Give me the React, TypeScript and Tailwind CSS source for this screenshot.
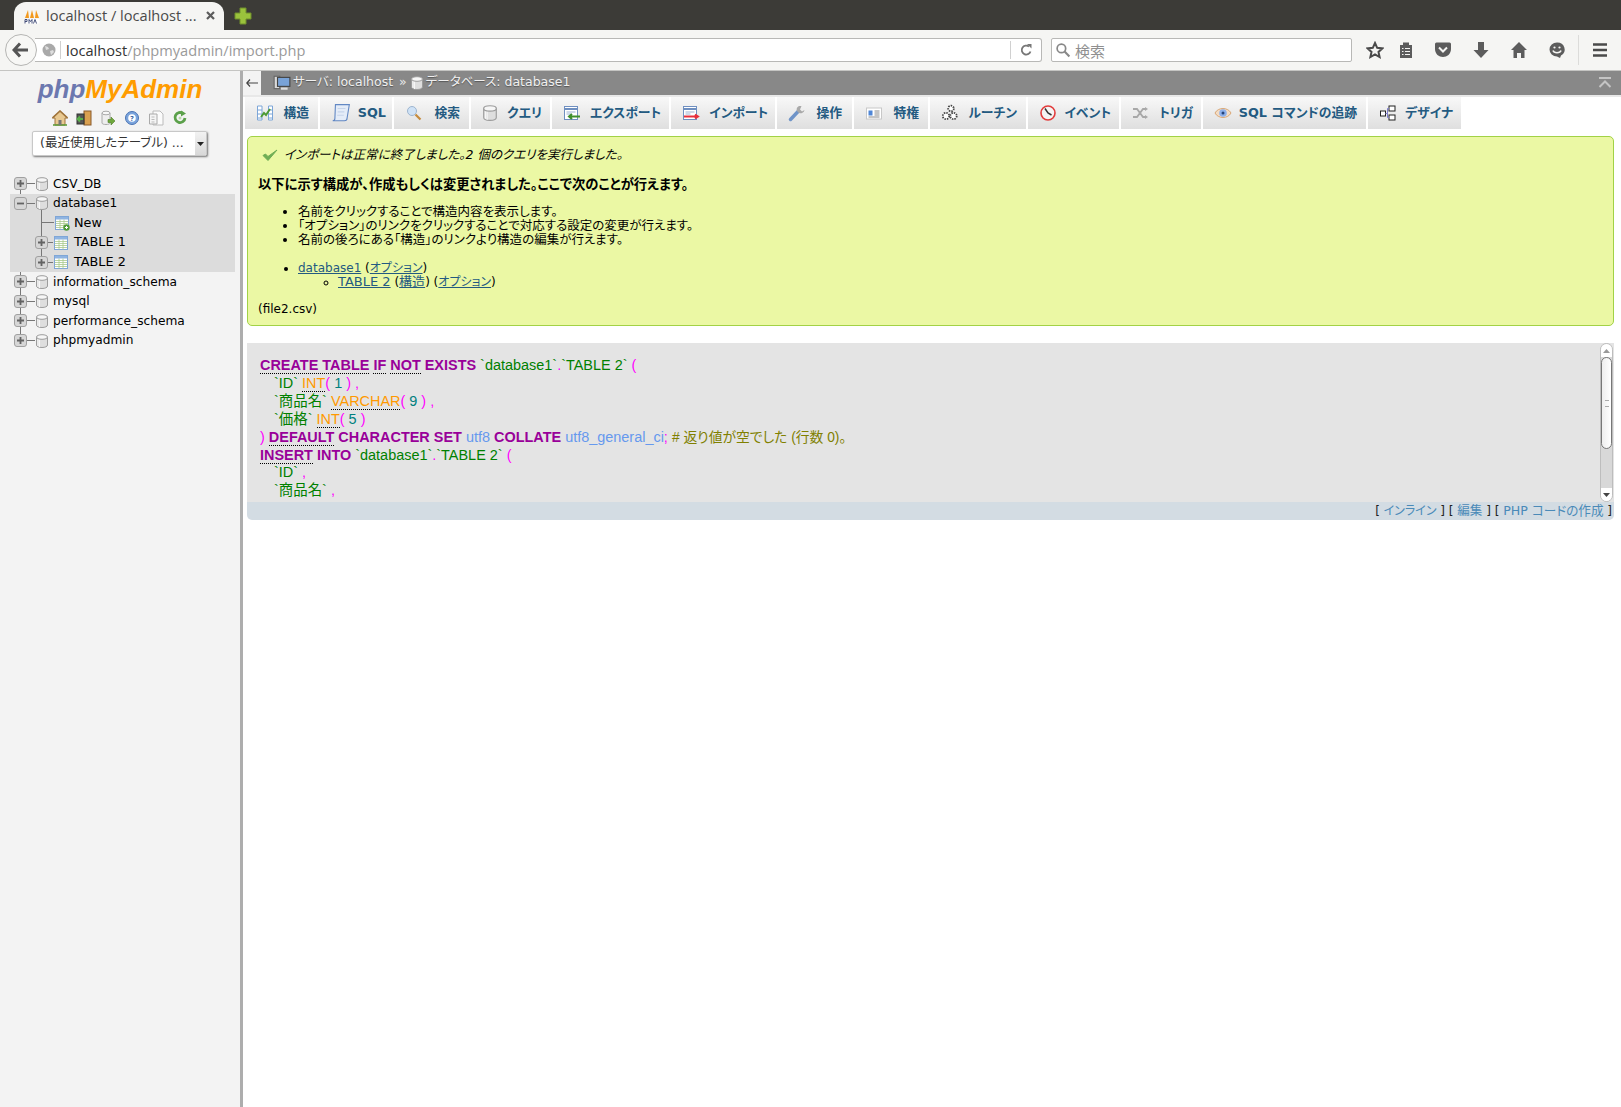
const sans = "font-['DejaVu_Sans','Noto_Sans_CJK_JP',sans-serif]";

const tabs = [
  { label: '構造', w: 'w-[75px]', icon: 'structure', pr: 'pr-[9px]' },
  { label: 'SQL', w: 'w-[74px]', icon: 'sql', pr: 'pr-[6px]' },
  { label: '検索', w: 'w-[77px]', icon: 'search', pr: 'pr-[9px]' },
  { label: 'クエリ', w: 'w-[81px]', icon: 'db', pr: 'pr-[8px]' },
  { label: 'エクスポート', w: 'w-[119px]', icon: 'export', pr: 'pr-[8px]' },
  { label: 'インポート', w: 'w-[106px]', icon: 'import', pr: 'pr-[7px]' },
  { label: '操作', w: 'w-[77px]', icon: 'wrench', pr: 'pr-[10px]' },
  { label: '特権', w: 'w-[76px]', icon: 'card', pr: 'pr-[9px]' },
  { label: 'ルーチン', w: 'w-[98px]', icon: 'gears', pr: 'pr-[9px]' },
  { label: 'イベント', w: 'w-[93px]', icon: 'clock', pr: 'pr-[8px]' },
  { label: 'トリガ', w: 'w-[82px]', icon: 'trigger', pr: 'pr-[8px]' },
  { label: 'SQL コマンドの追跡', w: 'w-[165px]', icon: 'eye', pr: 'pr-[9px]' },
  { label: 'デザイナ', w: 'w-[95px]', icon: 'designer', pr: 'pr-[8px]' },
];

function DbIcon({ size = 14 }: { size?: number }) {
  return (
    <svg width={size} height={size} viewBox="0 0 14 14" className="shrink-0">
      <path d="M1.500 3v8c0 1.500 2.400 2.500 5.500 2.500s5.500-1 5.500-2.500V3z" fill="#dedede" stroke="#9c9c9c" />
      <path d="M3 5v7M4.500 5.500v7.500" stroke="#f6f6f6" />
      <ellipse cx="7" cy="3" rx="5.500" ry="2.300" fill="#f6f6f6" stroke="#9c9c9c" />
    </svg>
  );
}

function TableIcon({ plus }: { plus?: boolean }) {
  return (
    <svg width="16" height="16" viewBox="0 0 16 16" className="shrink-0">
      <rect x="1.500" y="1.500" width="13" height="13" fill="#fff" stroke="#7fa6d6" />
      <rect x="2" y="2" width="12" height="2.500" fill="#8fb4e2" />
      <path d="M2 6.500h12M2 8.500h12M2 10.500h12M2 12.500h12M6 4.500v10M10 4.500v10" stroke="#a8c98c" strokeWidth="0.800" />
      {plus && <circle cx="12.500" cy="12.500" r="3.200" fill="#4f9a3a" />}
      {plus && <path d="M11 12.500h3M12.500 11v3" stroke="#fff" />}
    </svg>
  );
}

function Expander({ open }: { open?: boolean }) {
  return (
    <span className="w-[13px] h-[13px] shrink-0 rounded-[3px] border border-[#a0a0a0] bg-[#d6d6d6] flex items-center justify-center relative z-10">
      <svg width="9" height="9" viewBox="0 0 9 9">
        <path d={open ? 'M1 4.500h7' : 'M1 4.500h7M4.500 1v7'} stroke="#636363" strokeWidth="1.800" />
      </svg>
    </span>
  );
}

function TabIcon({ name }: { name: string }) {
  const common = { width: 18, height: 18, viewBox: '0 0 18 18', className: 'shrink-0' };
  switch (name) {
    case 'structure':
      return (
        <svg {...common}>
          <path d="M1.500 2h4.500v14H1.500zM12.500 2h4v14h-4z" fill="#fff" stroke="#7da6d8" />
          <path d="M1.500 6h4.500M1.500 10h4.500M1.500 14h4.500M12.500 6h4M12.500 10h4M12.500 14h4" stroke="#7da6d8" />
          <path d="M5 13l3-4 2 2 4-6" fill="none" stroke="#4c9a34" strokeWidth="2" />
        </svg>
      );
    case 'sql':
      return (
        <svg width="20" height="20" viewBox="0 0 18 18" className="shrink-0">
          <path d="M4 1.500h12.500l-2 12c0 1.500-1 2.500-2.500 2.500H1.500c1 0 2-.5 2-2z" fill="#e4ecf8" stroke="#6288c4" />
          <path d="M6 5h7M6 8h6M5.500 11h6" stroke="#c5d4ea" />
        </svg>
      );
    case 'search':
      return (
        <svg {...common}>
          <circle cx="7" cy="7" r="4.500" fill="#cfe2f6" stroke="#9db5cf" />
          <path d="M10.500 10.500l5 5" stroke="#c58a3c" strokeWidth="2.200" />
        </svg>
      );
    case 'db':
      return <DbIcon size={16} />;
    case 'export':
    case 'import':
      return (
        <svg {...common}>
          <rect x="1.500" y="2.500" width="13" height="13" fill="#fff" stroke="#6f8fc0" />
          <path d="M1.500 5h13" stroke="#6f8fc0" strokeWidth="2" />
          <path d="M3.500 8h9M3.500 10h5" stroke="#9db3d3" />
          {name === 'export' ? (
            <path d="M17 12.500H7M9 10l-3 2.500L9 15" fill="none" stroke="#3f8f2c" strokeWidth="2" />
          ) : (
            <path d="M2 12.500h13M13 10.500l3 2-3 2" fill="none" stroke="#e8303c" strokeWidth="2" />
          )}
        </svg>
      );
    case 'wrench':
      return (
        <svg {...common}>
          <path d="M2.500 15.500l8-8.500" stroke="#6f94c8" strokeWidth="3.500" strokeLinecap="round" />
          <path d="M11 2a4 4 0 0 0-2 5l2 2a4 4 0 0 0 5.500-3l-2.500 1.500-2-2L13.500 2z" fill="#a9a9a9" />
        </svg>
      );
    case 'card':
      return (
        <svg {...common}>
          <rect x="1.500" y="4" width="15" height="11" fill="#fff" stroke="#c8c8c8" />
          <rect x="3.500" y="6.500" width="4" height="5" fill="#4f86d6" />
          <path d="M9.500 7h5M9.500 9h5M9.500 11h5M3.500 13h11" stroke="#8a8a8a" />
        </svg>
      );
    case 'gears':
      return (
        <svg {...common}>
          <circle cx="10" cy="4.500" r="2.800" fill="#fff" stroke="#444" strokeWidth="1.800" strokeDasharray="1.500 1" />
          <circle cx="5" cy="12" r="3.200" fill="#fff" stroke="#444" strokeWidth="1.800" strokeDasharray="1.500 1" />
          <circle cx="12.500" cy="12" r="3.200" fill="#fff" stroke="#444" strokeWidth="1.800" strokeDasharray="1.500 1" />
        </svg>
      );
    case 'clock':
      return (
        <svg {...common}>
          <circle cx="9" cy="9" r="7" fill="#f4f4f4" stroke="#e23c3c" strokeWidth="1.600" />
          <path d="M6 4.500L9 9l3.500 2" fill="none" stroke="#333" strokeWidth="1.500" />
        </svg>
      );
    case 'trigger':
      return (
        <svg {...common}>
          <path d="M1 5h4l6 8h3M1 13h4l6-8h3" fill="none" stroke="#a8a8a8" strokeWidth="1.800" />
          <path d="M13 3l3 2-3 2zM13 11l3 2-3 2z" fill="#a8a8a8" />
        </svg>
      );
    case 'eye':
      return (
        <svg {...common}>
          <path d="M1 9c3-6 13-6 16 0-3 6-13 6-16 0z" fill="#f3dcc4" stroke="#d9a878" />
          <circle cx="9" cy="9" r="3.800" fill="#8cb0ec" />
          <circle cx="9" cy="9" r="1.500" fill="#26437a" />
        </svg>
      );
    default:
      return (
        <svg {...common}>
          <rect x="1.500" y="7" width="5" height="5" fill="#fff" stroke="#222" />
          <rect x="10" y="2" width="6" height="5" fill="#fff" stroke="#222" />
          <rect x="10" y="11" width="6" height="5" fill="#fff" stroke="#222" />
          <path d="M6.500 9.500H8.500V4.500H10M8.500 9.500v4H10" fill="none" stroke="#7b7bc8" />
        </svg>
      );
  }
}

function Toolbar() {
  const g = '#5c5c5c';
  return (
    <div className="h-[41px] bg-[#f5f5f3] border-b border-[#c4c4c2] flex items-center pl-[5px] pr-0 shrink-0">
      <div className="w-[32px] h-[32px] rounded-full border border-[#b5b5b3] bg-[#f7f7f5] flex items-center justify-center z-10 shrink-0">
        <svg width="18" height="16" viewBox="0 0 18 16">
          <path d="M8 1.500L2 8l6 6.500M2.500 8H16" fill="none" stroke="#555" strokeWidth="3" />
        </svg>
      </div>
      <div className="w-[1007px] h-[24px] -ml-[2px] bg-white border border-l-0 border-[#b8b8b6] rounded-r-[3px] flex items-center shrink-0">
        <svg width="14" height="14" viewBox="0 0 14 14" className="ml-[7px] shrink-0">
          <circle cx="7" cy="7" r="6.500" fill="#a9a9a9" />
          <path d="M3 3l3 1 1 2-3 1zM8 8l3-1 1 2-3 3z" fill="#dedede" />
        </svg>
        <span className="w-px h-[18px] bg-[#d0d0d0] ml-[4px] shrink-0" />
        <span className="ml-[5px] text-[14.600px] font-['Open_Sans',sans-serif] text-[#9a9a9a] flex-1 leading-none">
          <span className="text-[#333]">localhost</span>/phpmyadmin/import.php
        </span>
        <span className="w-px h-[18px] bg-[#d0d0d0] shrink-0" />
        <svg width="14" height="14" viewBox="0 0 14 14" className="mx-[8px] shrink-0">
          <path d="M11.500 8.500A4.500 4.500 0 1 1 10 3.500" fill="none" stroke="#777" strokeWidth="1.800" />
          <path d="M8 1h4.500v4.500z" fill="#777" />
        </svg>
      </div>
      <div className="w-[301px] h-[24px] ml-[9px] bg-white border border-[#b8b8b6] rounded-[2px] flex items-center shrink-0">
        <svg width="16" height="16" viewBox="0 0 15 15" className="ml-[3px] shrink-0">
          <circle cx="6" cy="6" r="4" fill="none" stroke="#888" strokeWidth="1.600" />
          <path d="M9 9l4.500 4.500" stroke="#888" strokeWidth="2" />
        </svg>
        <span className="ml-[4px] text-[15px] text-[#8f8f8f] font-['Noto_Sans_CJK_JP',sans-serif] leading-none">検索</span>
      </div>
      <div className="flex items-center ml-[14px] gap-[20px]">
        <svg width="18" height="18" viewBox="0 0 18 18">
          <path d="M9 2l2.200 4.800 5.200.6-3.900 3.500 1.100 5.100L9 13.400 4.400 16l1.100-5.100-3.900-3.500 5.200-.6z" fill="none" stroke="#4a4a4a" strokeWidth="2" />
        </svg>
        <svg width="16" height="18" viewBox="0 0 16 18" className="-ml-[6px]">
          <path d="M2 4h12v13H2z" fill={g} />
          <rect x="5" y="1.500" width="6" height="3" fill={g} />
          <path d="M4 7.500h1.500M7 7.500h5M4 10.500h1.500M7 10.500h5M4 13.500h1.500M7 13.500h5" stroke="#f5f5f3" />
        </svg>
        <svg width="18" height="16" viewBox="0 0 18 16">
          <path d="M1 2a1.500 1.500 0 0 1 1.500-1.500h13A1.500 1.500 0 0 1 17 2v5c0 5-4 8-8 8s-8-3-8-8z" fill={g} />
          <path d="M5 5.500l4 4 4-4" fill="none" stroke="#f5f5f3" strokeWidth="2" />
        </svg>
        <svg width="18" height="18" viewBox="0 0 18 18">
          <path d="M6 1h6v8h4.500L9 17 1.500 9H6z" fill={g} />
        </svg>
        <svg width="18" height="18" viewBox="0 0 18 18">
          <path d="M9 1L1 9h2.500v8h3.500v-5h4v5h3.500V9H17z" fill={g} />
        </svg>
        <svg width="18" height="18" viewBox="0 0 18 18">
          <path d="M9 1.500a7.500 7 0 0 1 4 13l-1 2.500-3-1.500a7.500 7 0 0 1 0-14z" fill={g} />
          <circle cx="6.500" cy="6.500" r="1.100" fill="#f5f5f3" />
          <circle cx="11.500" cy="6.500" r="1.100" fill="#f5f5f3" />
          <path d="M5 9.500c1 3 7 3 8 0" fill="none" stroke="#f5f5f3" strokeWidth="1.500" />
        </svg>
        <span className="w-px h-[30px] bg-[#dcdcda] -mx-[8px]" />
        <svg width="18" height="16" viewBox="0 0 18 16">
          <path d="M2 2.500h14M2 8h14M2 13.500h14" stroke="#4a4a4a" strokeWidth="2.600" />
        </svg>
      </div>
    </div>
  );
}

function TitleBar() {
  return (
    <div className="h-[30px] bg-[#3c3b37] flex items-end pl-[14px] shrink-0">
      <div className="w-[210px] h-[28px] pb-[1px] bg-[#f5f5f3] rounded-t-[12px] flex items-center pl-[10px] shrink-0">
        <svg width="16" height="16" viewBox="0 0 16 16" className="shrink-0">
          <path d="M1 10l3-8 1 8zM6 10l2-8 2 8zM11 10l1-8 3 8z" fill="#f39a1e" />
          <rect x="0.500" y="11" width="15" height="4.500" fill="#fff" />
          <path d="M1 15.500V11.500h2v2H1M5 15.500v-4l1.500 2 1.500-2v4M9.500 15.500l1.500-4 1.500 4" fill="none" stroke="#33406e" strokeWidth="0.900" />
        </svg>
        <span className="ml-[6px] text-[14.600px] text-[#4a4a4a] font-['Open_Sans',sans-serif] whitespace-nowrap leading-none">localhost / localhost ...</span>
        <svg width="11" height="11" viewBox="0 0 11 11" className="ml-[8px] shrink-0">
          <path d="M2 2l7 7M9 2l-7 7" stroke="#5c5c5c" strokeWidth="2.200" />
        </svg>
      </div>
      <svg width="18" height="18" viewBox="0 0 18 18" className="ml-[10px] mb-[5px] shrink-0">
        <path d="M6 1h6v5h5v6h-5v5H6v-5H1V6h5z" fill="#9ac23c" stroke="#6f8f2a" />
      </svg>
    </div>
  );
}

function TreeRow({ name, open, indent, icon, caps }: { name: string; open?: boolean; indent?: boolean; icon?: string; caps?: boolean }) {
  return (
    <div className={`h-[19.600px] flex items-center ${indent ? 'pl-[35px]' : 'pl-[14px]'}`}>
      {icon === 'new' ? <span className="w-[13px] shrink-0" /> : <Expander open={open} />}
      <span className={`h-px bg-[#777] shrink-0 ${icon === 'new' ? 'w-[13px] -ml-[7px]' : indent ? 'w-[5px]' : 'w-[8px]'}`} />
      {icon ? <TableIcon plus={icon === 'new'} /> : <DbIcon />}
      <span className={`${icon === 'table' ? 'ml-[5px]' : 'ml-[4px]'} ${caps ? 'text-[12.800px]' : 'text-[12.200px]'} text-[#000] leading-none whitespace-nowrap`}>{name}</span>
    </div>
  );
}

function Sidebar() {
  return (
    <aside className="w-[243px] shrink-0 bg-[#f3f3f3] border-r-[3px] border-[#adadad] flex flex-col">
      <div className="mt-[1px] text-center h-[33px] font-['Liberation_Sans',sans-serif] italic font-bold text-[26px] leading-[35px]">
        <span className="text-[#6c78af]">php</span>
        <span className="text-[#ff9c00]">MyAdmin</span>
      </div>
      <div className="flex justify-center items-center gap-[8px] mt-[4px] h-[18px]">
        <svg width="16" height="16" viewBox="0 0 16 16">
          <path d="M8 1L0.500 8H3v7h10V8h2.500z" fill="#e8c890" stroke="#a0743c" />
          <path d="M0.500 8L8 1l7.500 7" fill="none" stroke="#a0743c" strokeWidth="1.600" />
          <path d="M1 15h14" stroke="#5f9c3c" strokeWidth="1.600" />
          <rect x="6.500" y="10" width="3" height="5" fill="#777" />
        </svg>
        <svg width="16" height="16" viewBox="0 0 16 16">
          <rect x="8" y="1" width="7" height="14" fill="#d9a050" stroke="#8a5a2a" />
          <rect x="1" y="4" width="7" height="10" fill="#555" stroke="#333" />
          <path d="M7 9H2M4 6.500L1.500 9 4 11.500" fill="none" stroke="#59b04a" strokeWidth="1.800" />
        </svg>
        <svg width="16" height="16" viewBox="0 0 16 16">
          <path d="M2 3v10c0 1 2 1.500 4 1.500s4-.5 4-1.500V3z" fill="#eee" stroke="#aaa" />
          <ellipse cx="6" cy="3" rx="4" ry="1.800" fill="#f8f8f8" stroke="#aaa" />
          <path d="M8 9.500h3V7l4 4-4 4v-2.500H8z" fill="#6fa83c" stroke="#4f7a2a" strokeWidth="0.600" />
        </svg>
        <svg width="16" height="16" viewBox="0 0 16 16">
          <circle cx="8" cy="8" r="6.500" fill="#7ba4dc" stroke="#4a74b4" />
          <circle cx="8" cy="8" r="3.800" fill="#fff" />
          <text x="8" y="10.500" textAnchor="middle" fontSize="7" fontWeight="700" fill="#2c5a9c">?</text>
        </svg>
        <svg width="16" height="16" viewBox="0 0 16 16">
          <path d="M5 1h7l3 3v11H5z" fill="#fbfbfb" stroke="#bbb" />
          <path d="M1.500 4H9v10H1.500z" fill="#f4f4f4" stroke="#aaa" />
          <path d="M3.500 7h3M3.500 9.500h3M3.500 12h3" stroke="#bbb" />
        </svg>
        <svg width="16" height="16" viewBox="0 0 16 16">
          <path d="M13 8A5 5 0 1 1 11 3.500" fill="none" stroke="#5ba04a" strokeWidth="2.800" />
          <path d="M9 0.500l5 3-5 3z" fill="#5ba04a" />
          <circle cx="8" cy="8" r="1.500" fill="#b8d8a8" />
        </svg>
      </div>
      <div className="mt-[4px] mx-[32px] w-[175px] h-[25px] bg-white border border-[#c8c8c8] rounded-[2px] shadow-[1px_1px_2px_#777] flex items-center overflow-hidden">
        <span className={`flex-1 pl-[7px] text-[12.500px] text-[#333] leading-none whitespace-nowrap ${sans}`}>(最近使用したテーブル) ...</span>
        <span className="w-[11px] h-full bg-gradient-to-b from-[#f2f2f2] to-[#d8d8d8] flex items-center justify-center shrink-0">
          <svg width="7" height="4" viewBox="0 0 7 4">
            <path d="M0 0h7L3.500 4z" fill="#222" />
          </svg>
        </span>
      </div>
      <div className={`relative mt-[18px] ${sans}`}>
        <span className="absolute left-[20px] top-[10px] h-[157px] w-px bg-[#777]" />
        <TreeRow name="CSV_DB" />
        <div className="bg-[#dcdcdc] ml-[10px] mr-[5px] relative">
          <span className="absolute left-[31px] top-[16px] h-[53px] w-px bg-[#777]" />
          <div className="-ml-[10px]">
            <TreeRow name="database1" open />
            <TreeRow name="New" indent icon="new" caps />
            <TreeRow name="TABLE 1" indent icon="table" caps />
            <TreeRow name="TABLE 2" indent icon="table" caps />
          </div>
        </div>
        <TreeRow name="information_schema" />
        <TreeRow name="mysql" />
        <TreeRow name="performance_schema" />
        <TreeRow name="phpmyadmin" />
      </div>
    </aside>
  );
}

function Breadcrumb() {
  return (
    <div className="h-[24px] bg-[#888888] flex items-center shrink-0">
      <div className="w-[18px] h-[24px] bg-[#f3f3f3] flex items-center justify-center shrink-0">
        <svg width="12" height="8" viewBox="0 0 12 8">
          <path d="M4 .500L.800 4 4 7.500M1 4h11" fill="none" stroke="#444" strokeWidth="1.200" />
        </svg>
      </div>
      <svg width="18" height="18" viewBox="0 0 16 16" className="ml-[12px] shrink-0">
        <rect x="1" y="2" width="5" height="11" fill="#d9d9d9" stroke="#666" />
        <rect x="4" y="3" width="11" height="8" fill="#79a3d8" stroke="#444" />
        <path d="M7 13h6" stroke="#ddd" strokeWidth="2" />
      </svg>
      <span className={`ml-[2px] pb-[2px] text-[12.500px] text-[#f0f0f0] leading-none whitespace-nowrap ${sans} [text-shadow:0_1px_1px_#555]`}>サーバ: localhost</span>
      <span className={`ml-[6px] pb-[2px] text-[12.500px] text-[#e8e8e8] leading-none ${sans}`}>»</span>
      <span className="ml-[3px]"><DbIcon size={14} /></span>
      <span className={`ml-[2px] pb-[2px] text-[12.500px] text-[#f0f0f0] leading-none whitespace-nowrap ${sans} [text-shadow:0_1px_1px_#555]`}>データベース: database1</span>
      <svg width="14" height="12" viewBox="0 0 14 12" className="ml-auto mr-[9px] shrink-0">
        <path d="M1 1h12M1.500 10L7 4.500l5.500 5.500" fill="none" stroke="#c4c4c4" strokeWidth="2" />
      </svg>
    </div>
  );
}

function Tabs() {
  return (
    <div className="h-[34px] flex shrink-0 border-t-2 border-[#e8e8e8] pl-[2px]">
      {tabs.map((t) => (
        <div key={t.label} className={`${t.w} ${t.pr} h-[32px] shrink-0 bg-gradient-to-b from-[#f8f8f8] to-[#dfdfdf] border-r-2 border-white flex items-center justify-between pl-[11px]`}>
          <TabIcon name={t.icon} />
          <span className={`text-[12.800px] font-bold text-[#235a81] whitespace-nowrap leading-none ${sans}`}>{t.label}</span>
        </div>
      ))}
    </div>
  );
}

function Notice() {
  const link = 'text-[#235a81] underline';
  return (
    <div className={`ml-[4px] mr-[7px] mt-[7px] h-[190px] bg-[#ebf8a4] border border-[#a2d246] rounded-[5px] pl-[10px] pt-[10px] text-[12.500px] leading-[14px] text-black shrink-0 ${sans}`}>
      <div className="flex items-center italic h-[16px]">
        <svg width="16" height="14" viewBox="0 0 16 14" className="ml-[4px] mr-[6px] shrink-0">
          <path d="M1 7.500l5 5L15 2l-9 6.500L3.500 6z" fill="#6fae55" stroke="#6fae55" />
        </svg>
        <span>インポートは正常に終了しました。2 個のクエリを実行しました。</span>
      </div>
      <p className="mt-[15px] font-bold text-[13.300px]">以下に示す構成が、作成もしくは変更されました。ここで次のことが行えます。</p>
      <ul className="mt-[13px] ml-[40px] list-disc">
        <li>名前をクリックすることで構造内容を表示します。</li>
        <li>「オプション」のリンクをクリックすることで対応する設定の変更が行えます。</li>
        <li>名前の後ろにある「構造」のリンクより構造の編集が行えます。</li>
      </ul>
      <ul className="mt-[14px] ml-[40px] list-disc text-[12px]">
        <li>
          <a className={link}>database1</a> (<a className={link}>オプション</a>)
          <ul className="ml-[40px] list-[circle]">
            <li>
              <a className={`${link} text-[13px]`}>TABLE 2</a> (<a className={`${link} text-[13px]`}>構造</a>) (<a className={link}>オプション</a>)
            </li>
          </ul>
        </li>
      </ul>
      <p className="mt-[13px] text-[12px]">(file2.csv)</p>
    </div>
  );
}

const kw = 'text-[#990099] font-bold';
const kwU = 'text-[#990099] font-bold border-b border-dotted border-black';
const str = 'text-[#008000]';
const br = 'text-[#ff00ff]';
const ty = 'text-[#ff9900] border-b border-dotted border-black';
const num = 'text-[#008080]';
const cs = 'text-[#6699ee]';

function SqlBox() {
  return (
    <div className="ml-[4px] mr-[7px] mt-[17px] rounded-b-[5px] overflow-hidden shrink-0">
      <div className="h-[159px] bg-[#e4e4e4] flex overflow-hidden">
        <div className="flex-1 pl-[13px] pt-[14px] text-[14.450px] leading-[17.900px] font-['Liberation_Sans','Noto_Sans_CJK_JP',sans-serif] whitespace-pre">
          <div>
            <span className={kwU}>CREATE TABLE</span> <span className={kwU}>IF</span> <span className={kwU}>NOT</span> <span className={kw}>EXISTS</span> <span className={str}>`database1`</span><span className={br}>.</span><span className={str}>`TABLE 2`</span> <span className={br}>(</span>
          </div>
          <div className="pl-[14px]">
            <span className={str}>`ID`</span> <span className={ty}>INT</span><span className={br}>(</span> <span className={num}>1</span> <span className={br}>)</span> <span className={br}>,</span>
          </div>
          <div className="pl-[14px]">
            <span className={str}>`商品名`</span> <span className={ty}>VARCHAR</span><span className={br}>(</span> <span className={num}>9</span> <span className={br}>)</span> <span className={br}>,</span>
          </div>
          <div className="pl-[14px]">
            <span className={str}>`価格`</span> <span className={ty}>INT</span><span className={br}>(</span> <span className={num}>5</span> <span className={br}>)</span>
          </div>
          <div>
            <span className={br}>)</span> <span className={kwU}>DEFAULT</span> <span className={kw}>CHARACTER SET</span> <span className={cs}>utf8</span> <span className={kw}>COLLATE</span> <span className={cs}>utf8_general_ci</span><span className={br}>;</span> <span className="text-[#808000] text-[13.800px]"># 返り値が空でした (行数 0)。</span>
          </div>
          <div>
            <span className={kwU}>INSERT</span> <span className={kw}>INTO</span> <span className={str}>`database1`</span><span className={br}>.</span><span className={str}>`TABLE 2`</span> <span className={br}>(</span>
          </div>
          <div className="pl-[14px]">
            <span className={str}>`ID`</span> <span className={br}>,</span>
          </div>
          <div className="pl-[14px]">
            <span className={str}>`商品名`</span> <span className={br}>,</span>
          </div>
        </div>
        <div className="w-[13px] mr-[1px] flex flex-col items-stretch shrink-0 bg-[#d8d8d8] border border-[#bdbdbd] rounded-full overflow-hidden">
          <span className="h-[13px] bg-white flex items-center justify-center shrink-0">
            <svg width="7" height="4" viewBox="0 0 7 4"><path d="M0 4h7L3.500 0z" fill="#999" /></svg>
          </span>
          <span className="h-[92px] bg-gradient-to-r from-[#eeeeee] to-[#ffffff] border border-[#777] rounded-full flex items-center justify-center shrink-0">
            <span className="w-[4px] h-[7px] border-y border-[#aaa]" />
          </span>
          <span className="flex-1" />
          <span className="h-[13px] bg-white flex items-center justify-center shrink-0">
            <svg width="7" height="4" viewBox="0 0 7 4"><path d="M0 0h7L3.500 4z" fill="#444" /></svg>
          </span>
        </div>
      </div>
      <div className={`h-[18px] bg-[#d3dce3] flex items-center justify-end pr-[2px] text-[12px] leading-none text-[#222] whitespace-pre ${sans}`}>
        [ <span className="text-[#4a8ab8]">インライン</span> ] [ <span className="text-[#4a8ab8] text-[12.500px]">編集</span> ] [ <span className="text-[#4a8ab8] text-[12.600px]">PHP コードの作成</span> ]
      </div>
    </div>
  );
}

export default function App() {
  return (
    <div className="w-[1621px] h-[1107px] flex flex-col overflow-hidden bg-white [font-feature-settings:'palt']">
      <TitleBar />
      <Toolbar />
      <div className="flex-1 flex min-h-0">
        <Sidebar />
        <main className="flex-1 min-w-0 flex flex-col">
          <Breadcrumb />
          <Tabs />
          <Notice />
          <SqlBox />
        </main>
      </div>
    </div>
  );
}
